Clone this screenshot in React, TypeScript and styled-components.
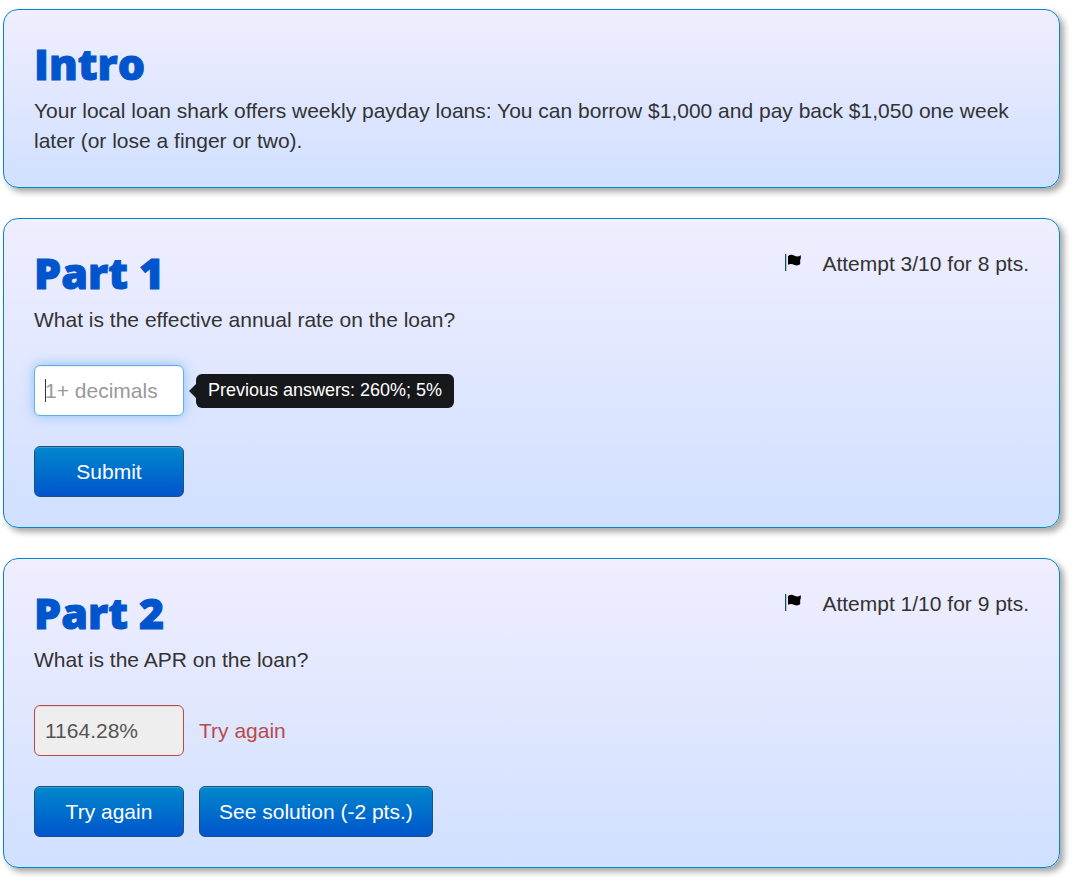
import React from "react";
import styled, { createGlobalStyle, css } from "styled-components";

const GlobalStyle = createGlobalStyle`
  *, *::before, *::after { box-sizing: border-box; }
  body {
    margin: 0;
    background: #fff;
    color: #333;
    font: 21px/30px "Liberation Sans", Arial, Helvetica, sans-serif;
  }
`;

const Page = styled.main`
  display: flex;
  flex-direction: column;
  gap: 30px;
  padding: 9px 16px 22px 3px;
`;

const Card = styled.section`
  padding: 30px;
  border: 1px solid #0088cc;
  border-radius: 15px;
  background: linear-gradient(#f0eeff, #d0e0ff);
  box-shadow: 4px 4px 6px rgba(0, 0, 0, 0.35);
`;

const CardHeader = styled.header`
  display: flex;
  justify-content: space-between;
  align-items: flex-start;
`;

const Title = styled.h2`
  margin: 0 0 8px;
  color: #0055cc;
  font: 800 43px/48px "Arial Black", "Open Sans", sans-serif;
  -webkit-text-stroke: 1px #0055cc;
`;

const Text = styled.p`
  display: block;
  margin: 0 0 1px;
`;

const Attempt = styled.div`
  display: flex;
  gap: 20px;
`;

const FlagIcon = styled.svg`
  width: 17px;
  height: 18px;
  margin-top: 5px;
`;

const Form = styled.form`
  display: flex;
  flex-direction: column;
  gap: 30px;
  margin-top: 30px;
`;

const Row = styled.div`
  display: flex;
  align-items: center;
  gap: 15px;
`;

const Field = styled.div`
  position: relative;
  width: 150px;
`;

const AnswerInput = styled.input<{ $state: "active" | "wrong" }>`
  display: block;
  width: 100%;
  height: 51px;
  padding: 0 10px;
  border: 1px solid;
  border-radius: 6px;
  outline: 0;
  font: inherit;
  caret-color: transparent;
  &::placeholder { color: #999; opacity: 1; }
  ${({ $state }) =>
    $state === "active"
      ? css`
          border-color: #66afe9;
          background: #fff;
          color: #555;
          box-shadow: inset 0 1px 1px rgba(0, 0, 0, 0.075), 0 0 12px rgba(82, 168, 236, 0.6);
        `
      : css`
          border-color: #b94a48;
          background: #eee;
          color: #555;
          box-shadow: inset 0 1px 1px rgba(0, 0, 0, 0.075);
        `}
`;

const Caret = styled.span`
  position: absolute;
  left: 11px;
  top: 14px;
  width: 1px;
  height: 23px;
  background: #333;
`;

const Tooltip = styled.div`
  display: flex;
  align-items: center;
  margin-left: -10px;
  font-size: 18px;
  line-height: 24px;
  color: #fff;
  &::before {
    content: "";
    border: solid transparent;
    border-width: 7px 7px 7px 0;
    border-right-color: #17181b;
  }
`;

const TooltipBody = styled.span`
  padding: 4px 12px 6px;
  border-radius: 6px;
  background: #17181b;
`;

const Feedback = styled.span`
  color: #b94a48;
`;

const Button = styled.button`
  min-width: 150px;
  height: 51px;
  padding: 0 19px;
  border: 1px solid #1f4f82;
  border-radius: 6px;
  background: linear-gradient(#0088cc, #0055cc);
  box-shadow: inset 0 1px 0 rgba(255, 255, 255, 0.2);
  color: #fff;
  font: inherit;
  cursor: pointer;
`;

function Attempts({ children }: { children: React.ReactNode }) {
  return (
    <Attempt>
      <FlagIcon viewBox="0 0 17 18" aria-hidden="true">
        <path d="M0 0h1.2v17H0z" fill="#0a4f94" />
        <path d="M1.2 0h.7v17h-.7z" fill="#d9a45a" opacity=".6" />
        <path d="M3 2.200C5 .4 7.300.5 9.500 1.800c2.200 1.100 4.200.8 6.300-.6v3l-.6 1.800v4c-2 1.600-3.500 1.700-5.700.9-2.200-.9-4.300-1.300-6.500-.1z" fill="#000" />
      </FlagIcon>
      <span>{children}</span>
    </Attempt>
  );
}

const stop = (e: React.FormEvent) => e.preventDefault();

export default function App() {
  return (
    <>
      <GlobalStyle />
      <Page>
        <Card>
          <Title>Intro</Title>
          <Text>
            Your local loan shark offers weekly payday loans: You can borrow $1,000 and pay back
            $1,050 one week later (or lose a finger or two).
          </Text>
        </Card>

        <Card>
          <CardHeader>
            <Title>Part 1</Title>
            <Attempts>Attempt 3/10 for 8 pts.</Attempts>
          </CardHeader>
          <Text as="label" htmlFor="rate">What is the effective annual rate on the loan?</Text>
          <Form onSubmit={stop}>
            <Row>
              <Field>
                <AnswerInput id="rate" $state="active" placeholder="1+ decimals" />
                <Caret />
              </Field>
              <Tooltip role="tooltip">
                <TooltipBody>Previous answers: 260%; 5%</TooltipBody>
              </Tooltip>
            </Row>
            <Row>
              <Button type="submit">Submit</Button>
            </Row>
          </Form>
        </Card>

        <Card>
          <CardHeader>
            <Title>Part 2</Title>
            <Attempts>Attempt 1/10 for 9 pts.</Attempts>
          </CardHeader>
          <Text as="label" htmlFor="apr">What is the APR on the loan?</Text>
          <Form onSubmit={stop}>
            <Row>
              <Field>
                <AnswerInput id="apr" $state="wrong" defaultValue="1164.28%" readOnly />
              </Field>
              <Feedback>Try again</Feedback>
            </Row>
            <Row>
              <Button type="submit">Try again</Button>
              <Button type="button">See solution (-2 pts.)</Button>
            </Row>
          </Form>
        </Card>
      </Page>
    </>
  );
}
